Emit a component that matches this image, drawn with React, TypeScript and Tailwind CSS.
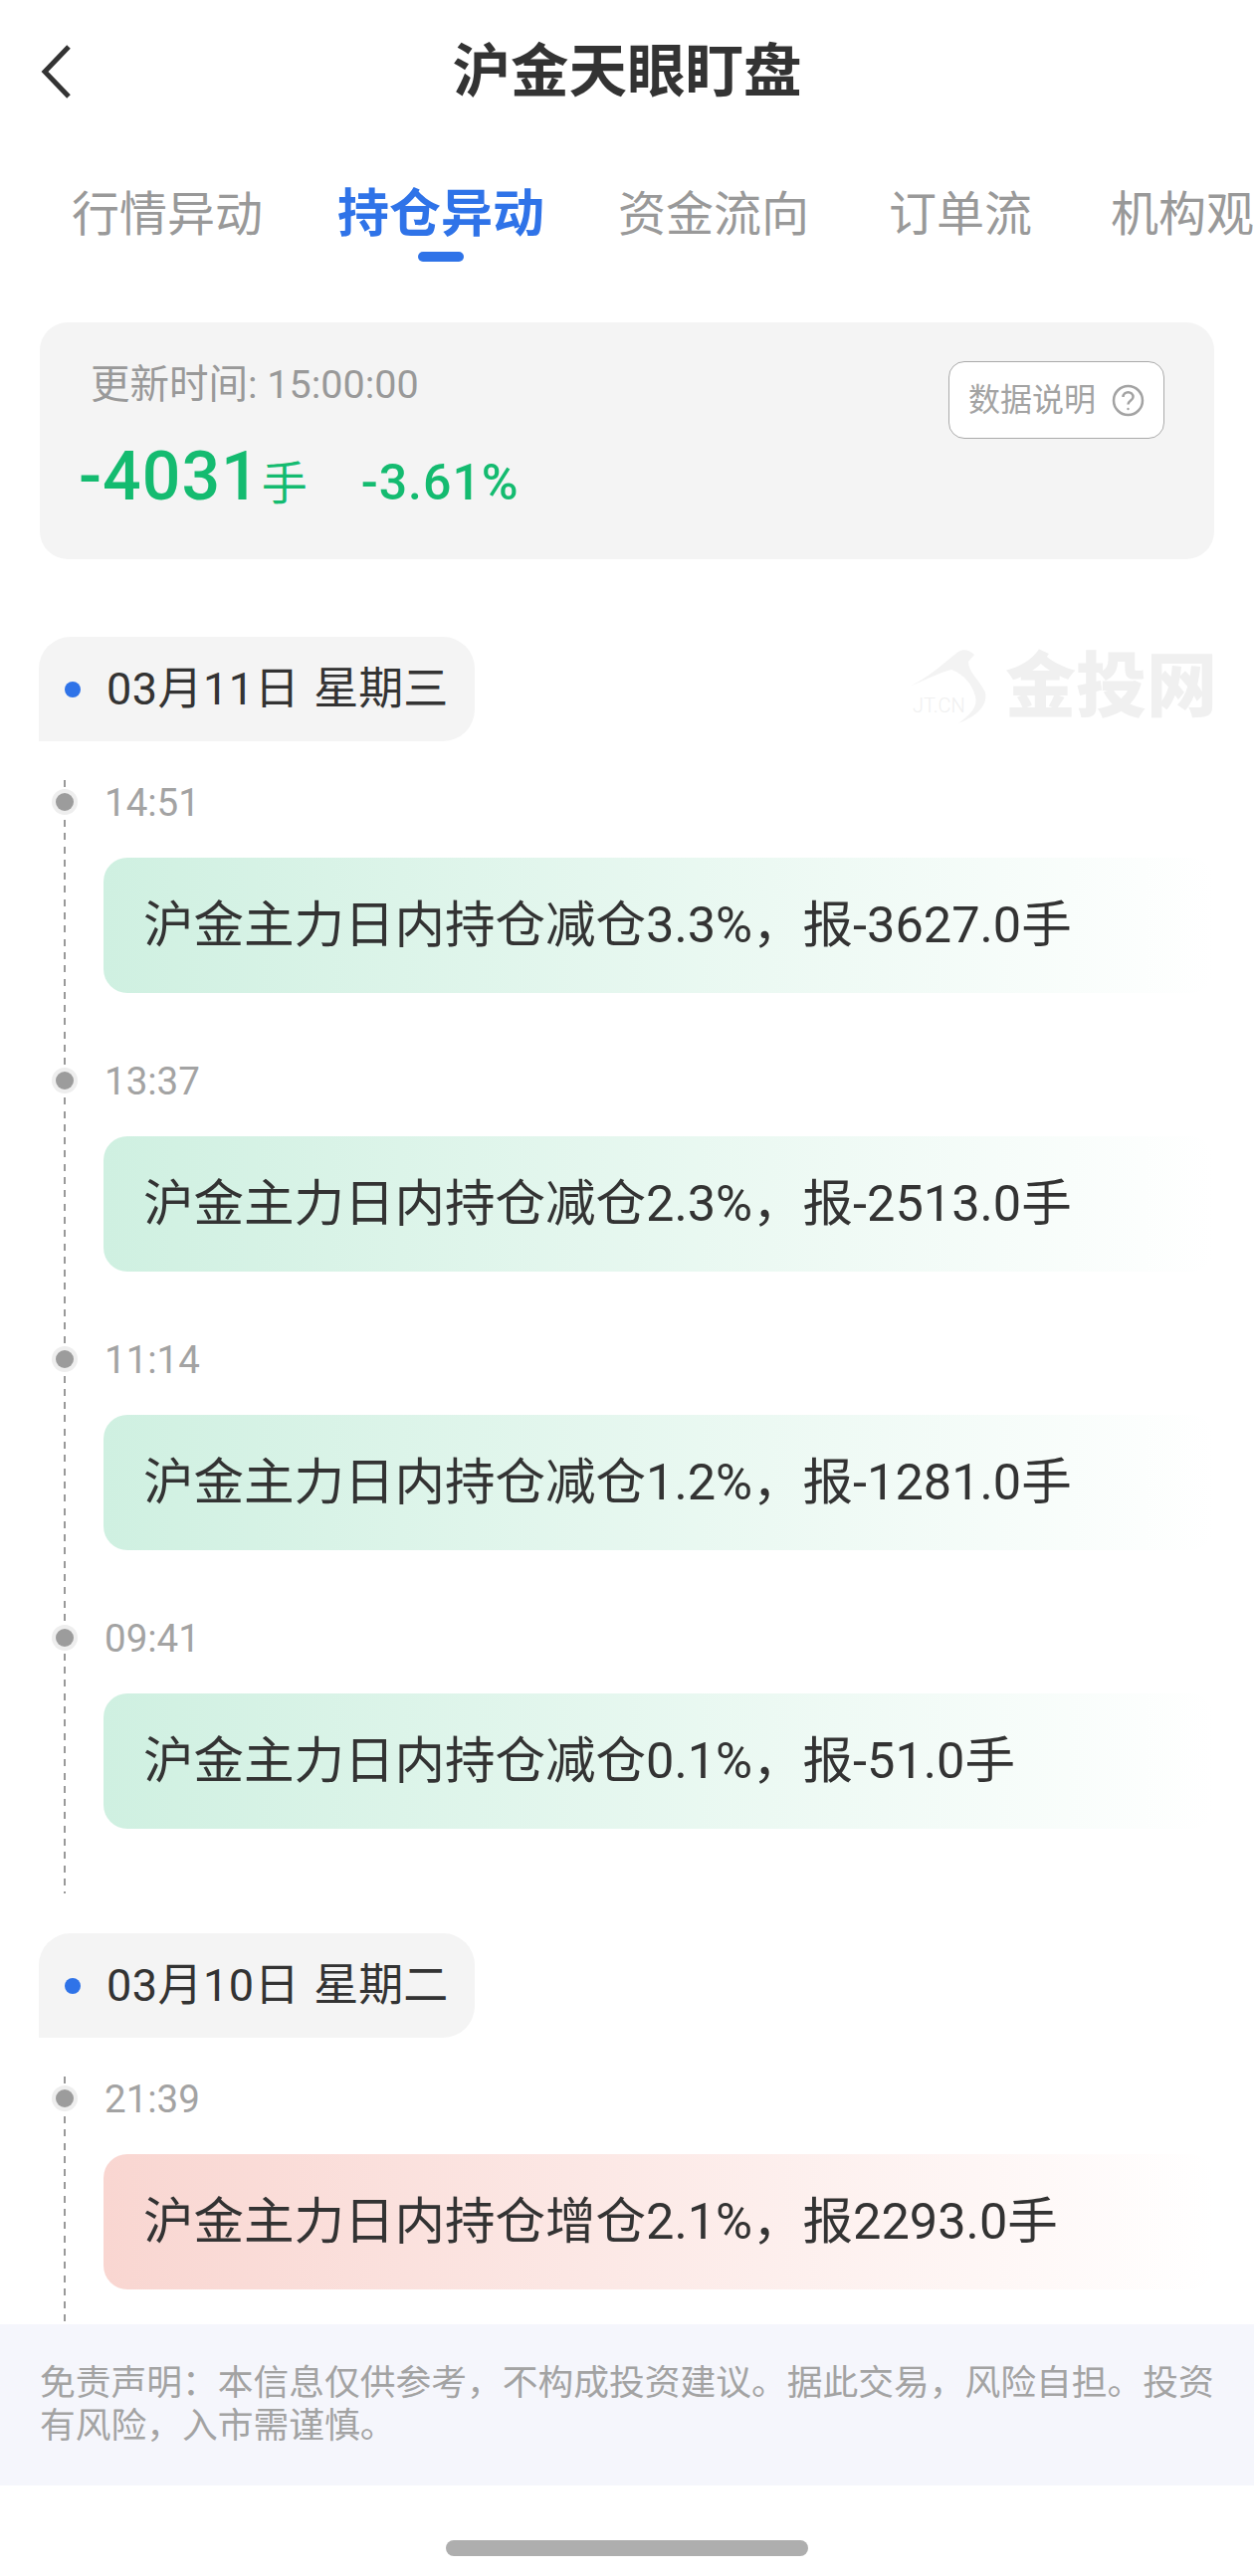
const tabs = [
  { label: "行情异动", gap: "ml-0" },
  { label: "持仓异动", gap: "ml-[75px]", active: true },
  { label: "资金流向", gap: "ml-[74px]" },
  { label: "订单流", gap: "ml-[80px]" },
  { label: "机构观", gap: "ml-[79px]" },
]

const groups = [
  {
    date: "03月11日",
    week: "星期三",
    items: [
      { time: "14:51", text: "沪金主力日内持仓减仓3.3%，报-3627.0手", up: false },
      { time: "13:37", text: "沪金主力日内持仓减仓2.3%，报-2513.0手", up: false },
      { time: "11:14", text: "沪金主力日内持仓减仓1.2%，报-1281.0手", up: false },
      { time: "09:41", text: "沪金主力日内持仓减仓0.1%，报-51.0手", up: false },
    ],
  },
  {
    date: "03月10日",
    week: "星期二",
    items: [{ time: "21:39", text: "沪金主力日内持仓增仓2.1%，报2293.0手", up: true }],
  },
]

function Watermark() {
  return (
    <div className="absolute left-[913px] top-[652px] flex items-center gap-[17px]">
      <div className="relative w-[80px] h-[76px]">
        <svg width="80" height="76" viewBox="0 0 80 76" fill="#f3f3f3">
          <path d="M0 38 C18 31 38 12 50 3 C55 0 61 1 66 6 L60 13 C60 24 72 32 77 44 C80 58 66 69 50 75 C62 66 70 58 67 48 C64 36 56 26 43 21 C30 24 14 33 0 38 Z" />
        </svg>
        <span className="absolute left-[4px] top-[46px] text-[20px] leading-[22px] font-light text-[#f0f0f0]">JT.CN</span>
      </div>
      <span className="text-[71px] leading-[76px] font-black text-[#f0f0f0]">金投网</span>
    </div>
  )
}

function DateBadge({ date, week }: { date: string; week: string }) {
  return (
    <div className="ml-[39px] w-[438px] h-[105px] flex items-center bg-[#f4f4f4] rounded-[32px] rounded-bl-none">
      <span className="ml-[26px] w-[16px] h-[16px] rounded-full bg-[#2f73e8]"></span>
      <span className="ml-[26px] text-[45px] leading-[60px] tracking-[0.5px] text-[#333333]">{date}</span>
      <span className="ml-[14px] text-[45px] leading-[60px] text-[#333333]">{week}</span>
    </div>
  )
}

export default function App() {
  return (
    <div className="relative w-[1260px] h-[2589px] bg-white flex flex-col overflow-hidden font-['Roboto','Noto_Sans_CJK_SC',sans-serif]">
      <div className="h-[143px] shrink-0 grid grid-cols-[1fr_auto_1fr] items-center pl-[41px]">
        <svg width="30" height="54" viewBox="0 0 30 54" fill="none" stroke="#333333" strokeWidth="5">
          <polyline points="28,2 4,27 28,52" />
        </svg>
        <h1 className="text-[58.5px] leading-[70px] font-bold text-[#333333] mr-[41px]">沪金天眼盯盘</h1>
      </div>

      <div className="shrink-0 h-[181px] pt-[42px] pl-[72px] flex whitespace-nowrap">
        {tabs.map(t => (
          <div key={t.label} className={`flex flex-col items-center shrink-0 ${t.gap}`}>
            <span className={t.active ? "text-[52px] leading-[62px] font-bold text-[#2f73e8]" : "text-[48px] leading-[62px] text-[#999999]"}>
              {t.label}
            </span>
            {t.active && <span className="mt-[6px] w-[46px] h-[10px] rounded-full bg-[#2f73e8]"></span>}
          </div>
        ))}
      </div>

      <div className="shrink-0 mx-[40px] h-[238px] rounded-[28px] bg-[#f4f4f4] flex justify-between pl-[51px] pr-[50px]">
        <div className="pt-[39px]">
          <div className="text-[39.5px] leading-[48px] text-[#999999]">更新时间: 15:00:00</div>
          <div className="-ml-[12px] mt-[28px] flex items-baseline text-[#14bb70]">
            <span className="text-[68px] leading-[80px] font-medium tracking-[1px]">-4031</span>
            <span className="ml-[1px] text-[46px] leading-[60px]">手</span>
            <span className="ml-[54px] text-[50px] leading-[60px] font-medium tracking-[1px]">-3.61%</span>
          </div>
        </div>
        <div className="mt-[39px] w-[217px] h-[78px] bg-white border-[1.5px] border-[#aaaaaa] rounded-[16px] flex items-center justify-center gap-[16px]">
          <span className="text-[32px] leading-[40px] text-[#a3a3a3]">数据说明</span>
          <svg width="33" height="33" viewBox="0 0 33 33" fill="none" stroke="#a3a3a3" strokeWidth="2.5">
            <circle cx="16.5" cy="16.5" r="14.5" />
            <path d="M11.5 13 C11.5 6.5 21.5 6.5 21.5 13 C21.5 16.5 16.5 16.5 16.5 20.5" />
            <circle cx="16.5" cy="25" r="1.2" fill="#a3a3a3" stroke="none" />
          </svg>
        </div>
      </div>

      <Watermark />

      <main className="flex-1 min-h-0 overflow-hidden pt-[78px]">
        {groups.map(g => (
          <section key={g.date} className="mb-[40px]">
            <DateBadge date={g.date} week={g.week} />
            <div className="relative ml-[52px] mt-[39px] pb-[65px] flex flex-col gap-[66px]">
              <div className="absolute left-[12px] top-0 bottom-0 w-[2px] bg-[repeating-linear-gradient(to_bottom,#999999_0,#999999_7px,transparent_7px,transparent_13.3px)]"></div>
              {g.items.map(item => (
                <div key={item.time} className="relative">
                  <div className="h-[44px] flex items-center gap-[27px]">
                    <div className="w-[26px] h-[26px] rounded-full bg-[#eeeeee] flex items-center justify-center">
                      <div className="w-[18px] h-[18px] rounded-full bg-[#9c9c9c]"></div>
                    </div>
                    <span className="pt-[2px] text-[38.5px] leading-[44px] text-[#a3a3a3]">{item.time}</span>
                  </div>
                  <div className={`mt-[34px] ml-[52px] w-[1116px] h-[136px] pl-[40px] flex items-center rounded-[24px] bg-linear-to-r to-white text-[50.5px] text-[#333333] whitespace-nowrap ${item.up ? "from-[#f9d6d1]" : "from-[#cff0e1]"}`}>
                    {item.text}
                  </div>
                </div>
              ))}
            </div>
          </section>
        ))}
      </main>

      <div className="shrink-0 h-[162px] bg-[#f5f6fc] pl-[40px] pr-[30px] pt-[38px] text-[35.75px] leading-[43px] text-[#a3a3a3]">
        免责声明：本信息仅供参考，不构成投资建议。据此交易，风险自担。投资有风险，入市需谨慎。
      </div>
      <div className="shrink-0 h-[91px] pt-[55px] flex justify-center">
        <div className="w-[364px] h-[16px] rounded-full bg-[#aeaeae]"></div>
      </div>
    </div>
  )
}
